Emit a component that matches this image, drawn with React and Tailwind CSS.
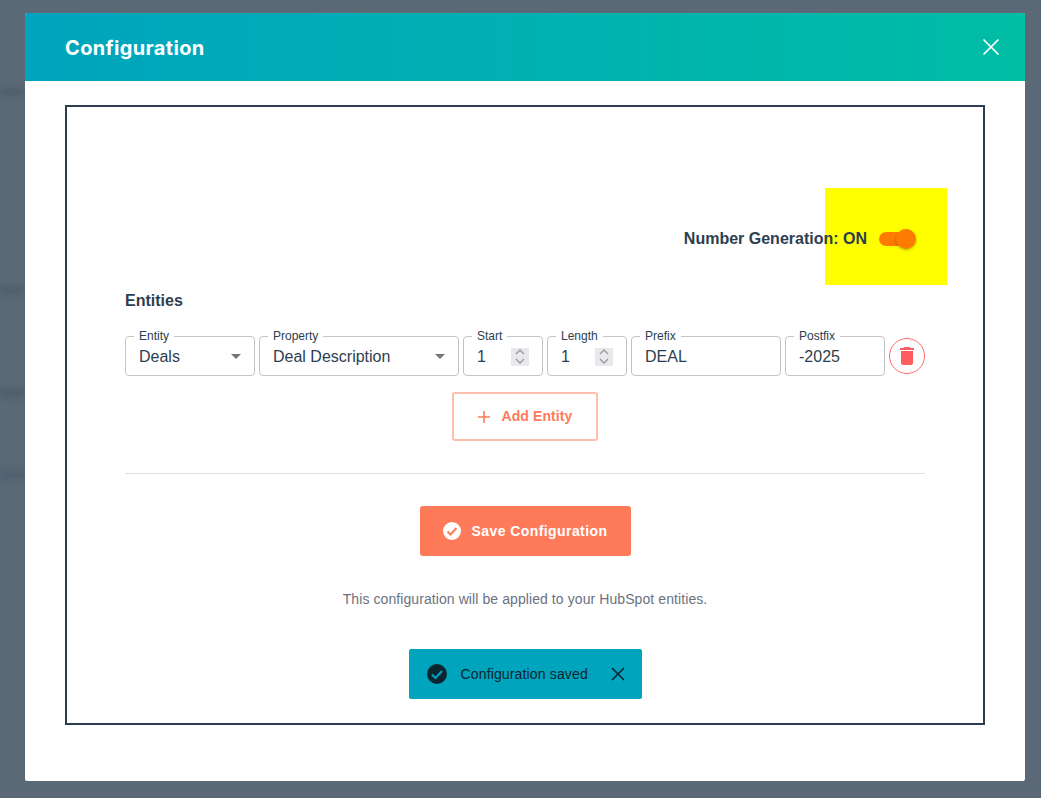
import React from "react";
import { X } from "lucide-react";

const sans = "font-['Liberation_Sans',Arial,sans-serif]";

function Field({ label, width, children }) {
  return (
    <div className={`relative h-10 border border-[#c4c4c4] rounded flex items-center pl-[13px] pr-2 pt-[2px] text-[16px] text-[#2d3e50] ${width}`}>
      <span className="absolute -top-[8px] left-[8px] bg-white px-[5px] text-[12px] leading-[14px] text-[#2d3e50]">
        {label}
      </span>
      {children}
    </div>
  );
}

function Caret() {
  return (
    <svg width="24" height="24" viewBox="0 0 24 24" className="ml-auto -mr-[2px] -mt-[3px] text-[#757575]" fill="currentColor">
      <path d="M7 10l5 5 5-5z" />
    </svg>
  );
}

function Spinner() {
  return (
    <div className="ml-auto mr-[5px] -mt-[1px] w-[18px] h-[18px] bg-[#e9e9ed] flex flex-col items-center justify-center gap-[3px]">
      <svg width="10" height="6" viewBox="0 0 10 6" fill="none" stroke="#9a9a9a" strokeWidth="1.3">
        <path d="M1 5l4-4 4 4" />
      </svg>
      <svg width="10" height="6" viewBox="0 0 10 6" fill="none" stroke="#9a9a9a" strokeWidth="1.3">
        <path d="M1 1l4 4 4-4" />
      </svg>
    </div>
  );
}

export default function App() {
  return (
    <div className={`relative min-h-screen h-[798px] overflow-hidden bg-[#5b6876] pl-[25px] pt-[13px] ${sans}`}>
      {/* blurred page behind the modal */}
      <div className="absolute top-[88px] left-0 w-[25px] h-[8px] bg-[#4f5d6c] blur-[3px]" />
      <div className="absolute top-[286px] left-0 w-[25px] h-[8px] bg-[#4f5d6c] blur-[3px]" />
      <div className="absolute top-[389px] left-0 w-[25px] h-[8px] bg-[#4f5d6c] blur-[3px]" />
      <div className="absolute top-[471px] left-0 w-[25px] h-[8px] bg-[#505e6d] blur-[3px]" />

      <div className="relative w-[1000px] h-[768px] bg-white rounded-[2px] flex flex-col">
        {/* HEADER */}
        <div className="h-[68px] shrink-0 rounded-t-[2px] bg-gradient-to-r from-[#00a4bd] to-[#00bda5] flex items-center justify-between pl-10 pr-5">
          <h2 className="pt-[2px] font-['Inter',sans-serif] font-bold text-[20px] text-white tracking-[0.35px]">Configuration</h2>
          <X className="text-white" size={28} strokeWidth={1.5} />
        </div>

        {/* BODY */}
        <div className="px-10 pt-6">
          <div className="h-[620px] border-2 border-[#2d3e50] px-[58px] pt-[81px] flex flex-col">
            {/* toggle row */}
            <div className="relative h-[97px] flex items-center justify-end pr-3 pt-1 shrink-0">
              <div className="absolute left-[700px] top-0 w-[122px] h-[97px] bg-[#ffff00]" />
              <span className="relative text-[16px] font-bold text-[#2d3e50] mr-3">Number Generation: ON</span>
              <div className="relative w-[26px] h-[14px] rounded-full bg-[#ff7a00]">
                <div className="absolute -right-[11px] -top-[3px] w-5 h-5 rounded-full bg-[#ff7a00] shadow-[0_1px_3px_rgba(0,0,0,0.3)]" />
              </div>
              <div className="w-[8px]" />
            </div>

            <div className="text-[16px] font-bold text-[#2d3e50] leading-[18px] mt-[7px]">Entities</div>

            {/* entity row */}
            <div className="flex gap-1 mt-[26px]">
              <Field label="Entity" width="w-[130px]">Deals<Caret /></Field>
              <Field label="Property" width="w-[200px]">Deal Description<Caret /></Field>
              <Field label="Start" width="w-[80px]">1<Spinner /></Field>
              <Field label="Length" width="w-[80px]">1<Spinner /></Field>
              <Field label="Prefix" width="w-[150px]">DEAL</Field>
              <Field label="Postfix" width="w-[100px]">-2025</Field>
              <div className="w-9 h-9 mt-[2px] rounded-full border border-[#ff6b70] flex items-center justify-center text-[#ff5c62]">
                <svg width="24" height="24" viewBox="0 0 24 24" fill="currentColor">
                  <path d="M6 19c0 1.1.9 2 2 2h8c1.1 0 2-.9 2-2V7H6v12zM19 4h-3.5l-1-1h-5l-1 1H5v2h14V4z" />
                </svg>
              </div>
            </div>

            <div className="flex justify-center mt-4">
              <button className="w-[146px] h-[49px] border-2 border-[#ffbdad] rounded-[3px] flex items-center justify-center gap-3 text-[14px] font-bold text-[#ff7a59] tracking-[0.1px]">
                <svg width="12" height="12" viewBox="0 0 12 12" fill="none" stroke="currentColor" strokeWidth="1.6">
                  <path d="M6 0v12M0 6h12" />
                </svg>
                Add Entity
              </button>
            </div>

            <div className="h-px bg-[#e0e0e0] mt-8" />

            <div className="flex justify-center mt-8">
              <button className="w-[211px] h-[50px] bg-[#ff7a59] rounded-[3px] flex items-center justify-center gap-[11px] text-[14px] font-bold text-white tracking-[0.42px]">
                <svg width="18" height="18" viewBox="0 0 18 18">
                  <circle cx="9" cy="9" r="9" fill="#fff" />
                  <path d="M4.5 9.5l3 3 6-6.5" fill="none" stroke="#ff7a59" strokeWidth="2" />
                </svg>
                Save Configuration
              </button>
            </div>

            <p className="text-center text-[14px] leading-4 text-[#6b7280] tracking-[0.085px] mt-[35px]">
              This configuration will be applied to your HubSpot entities.
            </p>

            <div className="flex justify-center mt-[42px]">
              <div className="w-[233px] h-[50px] bg-[#00a4bd] rounded-[2px] flex items-center pl-[18px] text-[14px] text-[#0b2530] tracking-[0.15px]">
                <svg width="20" height="20" viewBox="0 0 20 20">
                  <circle cx="10" cy="10" r="10" fill="#0b2530" />
                  <path d="M5 10.5l3.5 3.5 6.5-7" fill="none" stroke="#00a4bd" strokeWidth="2.2" />
                </svg>
                <span className="ml-[14px]">Configuration saved</span>
                <X className="ml-[19px]" size={22} strokeWidth={1.8} />
              </div>
            </div>
          </div>
        </div>
      </div>
    </div>
  );
}
